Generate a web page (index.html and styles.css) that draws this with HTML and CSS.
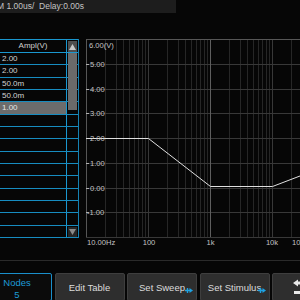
FILE: index.html
```html
<!DOCTYPE html>
<html>
<head>
<meta charset="utf-8">
<link rel="stylesheet" href="styles.css">
</head>
<body>
<div class="screen">
  <div class="topbar"><span class="tb-text">M 1.00us/&nbsp; Delay:0.00s</span></div>
  <div class="main">
    <div class="table">
      <div class="thead">
        <div class="th">Ampl(V)</div>
        <div class="sb-up"><svg width="9" height="8" viewBox="0 0 9 8"><path d="M4.5 1 L8 7 H1 Z" fill="#c8c8c8"/></svg></div>
      </div>
      <div class="row"><div class="cell">2.00</div><div class="rest"></div></div>
      <div class="row"><div class="cell">2.00</div><div class="rest"></div></div>
      <div class="row"><div class="cell">50.0m</div><div class="rest"></div></div>
      <div class="row"><div class="cell">50.0m</div><div class="rest"></div></div>
      <div class="row sel"><div class="cell">1.00</div><div class="rest"></div></div>
      <div class="row"><div class="cell"></div><div class="rest"></div></div>
      <div class="row"><div class="cell"></div><div class="rest"></div></div>
      <div class="row"><div class="cell"></div><div class="rest"></div></div>
      <div class="row"><div class="cell"></div><div class="rest"></div></div>
      <div class="row"><div class="cell"></div><div class="rest"></div></div>
      <div class="row"><div class="cell"></div><div class="rest"></div></div>
      <div class="row"><div class="cell"></div><div class="rest"></div></div>
      <div class="row"><div class="cell"></div><div class="rest"></div></div>
      <div class="row"><div class="cell"></div><div class="rest"></div></div>
      <div class="row"><div class="cell"></div><div class="rest"></div></div>
      <div class="thumb"></div>
      <div class="sb-down"><svg width="9" height="8" viewBox="0 0 9 8"><path d="M1 1 H8 L4.5 7 Z" fill="#8a8a8a"/></svg></div>
    </div>
    <div class="chart">
      <svg class="plot" width="214" height="212" viewBox="0 0 214 212" shape-rendering="crispEdges">
        <g stroke="#262626" stroke-width="1">
          <path d="M19.5 0V198 M30.5 0V198 M37.5 0V198 M43.5 0V198 M48.5 0V198 M52.5 0V198 M56.5 0V198 M59.5 0V198
                   M81.5 0V198 M92.5 0V198 M99.5 0V198 M105.5 0V198 M110.5 0V198 M114.5 0V198 M118.5 0V198 M121.5 0V198
                   M143.5 0V198 M154.5 0V198 M161.5 0V198 M167.5 0V198 M172.5 0V198 M176.5 0V198 M180.5 0V198 M183.5 0V198
                   M205.5 0V198 M216.5 0V198"/>
        </g>
        <g stroke="#383838" stroke-width="1">
          <path d="M62.5 0V198 M186.5 0V198"/>
          <path d="M0 25.5H214 M0 50.5H214 M0 74.5H214 M0 99.5H214 M0 124.5H214 M0 149.5H214 M0 173.5H214 M0 198.5H214"/>
        </g>
        <path d="M124.5 0V198" stroke="#5e5e5e"/>
        <path d="M0 0.5H214 M0.5 0V198" stroke="#565656"/>
        <g stroke="#b0b0b0">
          <path d="M0 25.5H3 M0 50.5H3 M0 74.5H3 M0 99.5H3 M0 124.5H3 M0 149.5H3 M0 173.5H3"/>
        </g>
        <path d="M0 99.5 H62.5 L124.5 147.5 H186.5 L248 124" fill="none" stroke="#e0e0e0" stroke-width="1" shape-rendering="auto"/>
        <g class="ylab">
          <text x="3" y="9">6.00(V)</text>
          <text x="4" y="28">5.00</text>
          <text x="4" y="53">4.00</text>
          <text x="4" y="77">3.00</text>
          <text x="4" y="102">2.00</text>
          <text x="4" y="127">1.00</text>
          <text x="4" y="152">0.00</text>
          <text x="1" y="176">-1.00</text>
        </g>
        <g class="xlab">
          <text x="1" y="206">10.00Hz</text>
          <text x="63" y="206" text-anchor="middle">100</text>
          <text x="124.5" y="206" text-anchor="middle">1k</text>
          <text x="186" y="206" text-anchor="middle">10k</text>
          <text x="206" y="206">100k</text>
        </g>
      </svg>
    </div>
  </div>
  <div class="sep"></div>
  <div class="buttons">
    <div class="btn active"><span>Nodes</span><span>5</span></div>
    <div class="btn"><span>Edit Table</span></div>
    <div class="btn"><span>Set Sweep</span><svg class="mark" width="8" height="7" viewBox="0 0 8 7"><path d="M0 3.5H5 M2.5 1V6" stroke="#1ea2e2" stroke-width="1.4"/><path d="M4.5 1 L8 3.5 L4.5 6 Z" fill="#1ea2e2"/></svg></div>
    <div class="btn"><span>Set Stimulus</span><svg class="mark" width="8" height="7" viewBox="0 0 8 7"><path d="M0 3.5H5 M2.5 1V6" stroke="#1ea2e2" stroke-width="1.4"/><path d="M4.5 1 L8 3.5 L4.5 6 Z" fill="#1ea2e2"/></svg></div>
    <div class="btn last"><svg class="ret" width="16" height="16" viewBox="0 0 16 16"><path d="M0 4 L5 0.5 V2.5 H16 V5.5 H5 V7.5 Z" fill="#e8e8e8"/><rect x="1" y="12" width="15" height="3" fill="#e8e8e8"/></svg></div>
  </div>
</div>
</body>
</html>
```

FILE: styles.css
```css
html, body {
  margin: 0;
  padding: 0;
  background: #060606;
}
.screen {
  width: 300px;
  height: 300px;
  overflow: hidden;
  display: flex;
  flex-direction: column;
  background: #060606;
  font-family: "Liberation Sans", Arial, sans-serif;
}
.topbar {
  width: 176px;
  height: 13px;
  background: #1d1d1d;
  flex: none;
  overflow: hidden;
  white-space: nowrap;
}
.tb-text {
  display: block;
  margin-left: -3px;
  font-size: 8.5px;
  line-height: 13px;
  color: #c4c4c4;
}
.main {
  flex: none;
  margin-top: 26px;
  height: 198px;
  display: flex;
  align-items: flex-start;
}
.table {
  position: relative;
  width: 79px;
  flex: none;
  display: flex;
  flex-direction: column;
  box-sizing: border-box;
  border-right: 1px solid #1582b3;
}
.thead {
  height: 14px;
  box-sizing: border-box;
  border-top: 1px solid #1a97cf;
  border-bottom: 1px solid #1a97cf;
  display: flex;
}
.th {
  width: 67px;
  box-sizing: border-box;
  border-right: 1px solid #1a97cf;
  text-align: center;
  font-size: 8px;
  line-height: 12px;
  color: #d0d0d0;
}
.sb-up {
  flex: 1;
  margin: 1px 1px 0 1px;
  background: #4e4e4e;
  display: flex;
  justify-content: center;
  align-items: center;
}
.row {
  height: 12.33px;
  box-sizing: border-box;
  border-bottom: 1px solid #178cc0;
  display: flex;
}
.cell {
  width: 67px;
  box-sizing: border-box;
  border-right: 1px solid #1a97cf;
  padding-left: 2px;
  font-size: 8px;
  line-height: 11px;
  color: #d2d2d2;
}
.rest {
  flex: 1;
}
.row.sel .cell {
  background: #6c6c6c;
  color: #e6e6e6;
}
.thumb {
  position: absolute;
  left: 68px;
  top: 14px;
  width: 9px;
  height: 57px;
  background: #6a6a6a;
}
.sb-down {
  position: absolute;
  left: 68px;
  top: 188px;
  width: 9px;
  height: 10px;
  background: #262626;
  display: flex;
  justify-content: center;
  align-items: center;
}
.chart {
  margin-left: 7px;
  width: 214px;
  height: 198px;
  flex: none;
}
.plot {
  display: block;
  overflow: visible;
}
.ylab text, .xlab text {
  font-family: "Liberation Sans", Arial, sans-serif;
  font-size: 7.6px;
  fill: #c4c4c4;
}
.sep {
  flex: none;
  margin-top: 23px;
  height: 1px;
  background: #2a2a2a;
}
.buttons {
  flex: none;
  margin-top: 12px;
  margin-left: -18px;
  display: flex;
  gap: 2.5px;
}
.btn {
  position: relative;
  width: 70px;
  height: 28px;
  flex: none;
  box-sizing: border-box;
  background: #2e2e2e;
  border: 1px solid #3e3e3e;
  border-radius: 2px;
  display: flex;
  flex-direction: column;
  justify-content: center;
  align-items: center;
  font-size: 9.5px;
  color: #dcdcdc;
  line-height: 11px;
}
.btn.active {
  background: #0b0b0b;
  border-color: #1a8fcb;
  color: #1d9bd8;
  justify-content: flex-start;
  padding-top: 3px;
  line-height: 12px;
}
.mark {
  position: absolute;
  right: 3px;
  top: 13px;
}
.btn.last {
  align-items: flex-start;
}
.ret {
  margin-left: 20px;
}
```
